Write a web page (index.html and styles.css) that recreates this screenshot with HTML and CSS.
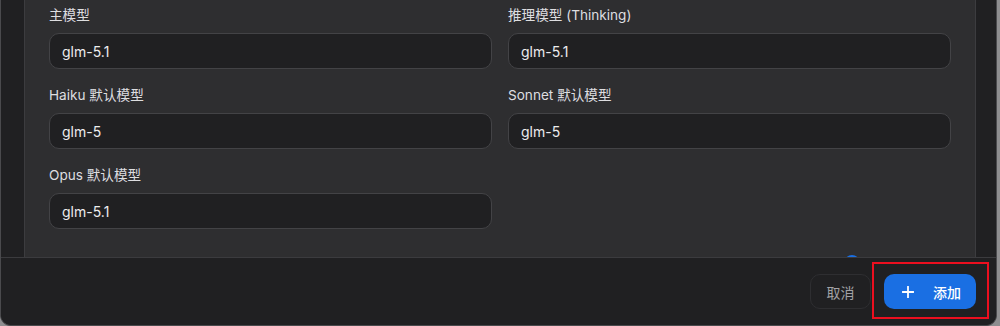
FILE: index.html
```html
<!DOCTYPE html>
<html lang="zh">
<head>
<meta charset="utf-8">
<link rel="stylesheet" href="styles.css">
</head>
<body>
<div class="window">
  <div class="content">
    <div class="card">
      <div class="grid">
        <div class="field">
          <label class="label">主模型</label>
          <div class="input">glm-5.1</div>
        </div>
        <div class="field">
          <label class="label">推理模型 (Thinking)</label>
          <div class="input">glm-5.1</div>
        </div>
        <div class="field">
          <label class="label">Haiku 默认模型</label>
          <div class="input">glm-5</div>
        </div>
        <div class="field">
          <label class="label">Sonnet 默认模型</label>
          <div class="input">glm-5</div>
        </div>
        <div class="field">
          <label class="label">Opus 默认模型</label>
          <div class="input">glm-5.1</div>
        </div>
      </div>
      <div class="extra"><span class="dot"></span></div>
    </div>
  </div>
  <div class="footer">
    <button class="btn cancel">取消</button>
    <button class="btn primary">
      <svg class="plus" width="12" height="12" viewBox="0 0 12 12"><path d="M6 0.5V11.5M0.5 6H11.5" stroke="#fff" stroke-width="1.8" stroke-linecap="round"/></svg>
      <span>添加</span>
    </button>
  </div>
</div>
<div class="highlight"></div>
</body>
</html>
```
FILE: styles.css
```css
* { box-sizing: border-box; }
html, body { margin: 0; padding: 0; }
body {
  width: 1000px;
  height: 326px;
  overflow: hidden;
  background: #8e8e90;
  font-family: "Inter", "Noto Sans CJK SC", sans-serif;
  position: relative;
}
.window {
  width: 997px;
  height: 326px;
  background: #202022;
  border: 1px solid #4a4a4d;
  border-top: none;
  border-radius: 0 0 11px 11px;
  display: flex;
  flex-direction: column;
  overflow: hidden;
}
.content {
  height: 257px;
  overflow: hidden;
  padding: 0 20px 0 23px;
  flex: none;
}
.card {
  background: #2e2e30;
  border: 1px solid #3c3c3f;
  border-top: none;
  padding: 5px 24px 24px;
}
.grid {
  display: grid;
  grid-template-columns: 1fr 1fr;
  column-gap: 16px;
  row-gap: 16px;
}
.field {
  display: flex;
  flex-direction: column;
  gap: 8px;
}
.label {
  font-size: 13.6px;
  line-height: 20px;
  color: #dedee0;
}
.input {
  height: 36px;
  border: 1px solid #434346;
  border-radius: 10px;
  background: #202022;
  padding: 0 12px;
  display: flex;
  align-items: center;
  font-size: 14px;
  color: #ececee;
}
.extra {
  margin-top: 26px;
  display: flex;
  justify-content: flex-end;
  padding-right: 91px;
}
.dot {
  width: 16px;
  height: 16px;
  border-radius: 50%;
  background: #1a6fe3;
}
.footer {
  flex: 1;
  border-top: 1px solid #3b3b3e;
  background: #202022;
  display: flex;
  justify-content: flex-end;
  align-items: flex-start;
  gap: 13px;
  padding: 16px 20px 0 0;
}
.btn {
  height: 35px;
  border-radius: 10px;
  font-family: "Inter", "Noto Sans CJK SC", sans-serif;
  font-size: 14px;
  display: flex;
  align-items: center;
  cursor: pointer;
}
.cancel {
  width: 61px;
  justify-content: center;
  background: #202022;
  border: 1px solid #2e2e31;
  color: #a2a2a6;
  padding: 0;
}
.primary {
  width: 92px;
  background: #1a6fe3;
  border: none;
  color: #ffffff;
  font-weight: 500;
  padding: 0 0 0 18px;
  gap: 19px;
}
.plus { flex: none; }
.highlight {
  position: absolute;
  left: 872px;
  top: 262px;
  width: 117px;
  height: 57px;
  border: 2px solid #ec0f1f;
}
```
